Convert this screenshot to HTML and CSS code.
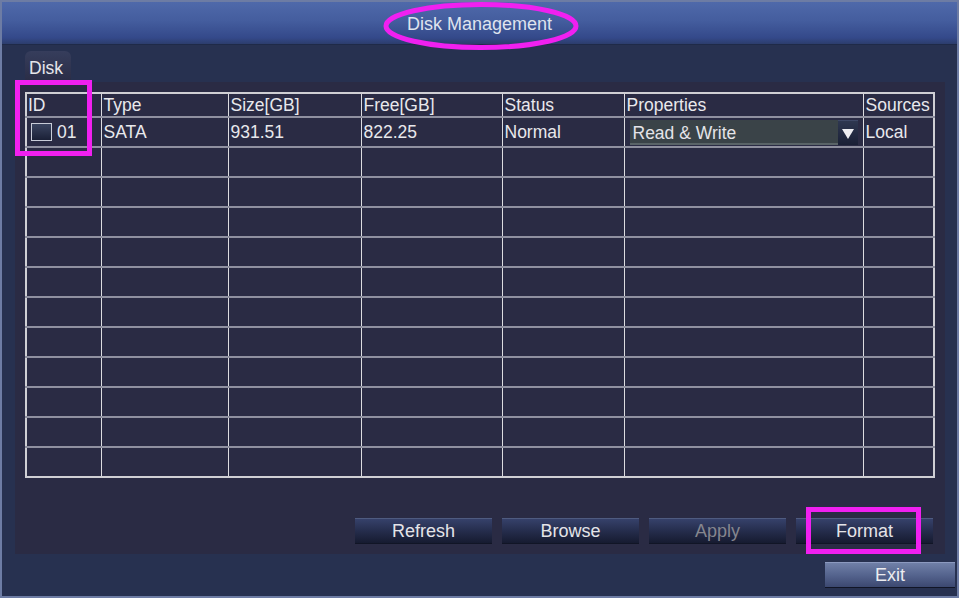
FILE: index.html
```html
<!DOCTYPE html>
<html lang="en">
<head>
  <meta charset="UTF-8">
  <title>Disk Management</title>
  <link rel="stylesheet" href="styles.css">
</head>
<body>
  <div class="window">
    <div class="titlebar">Disk Management</div>
    <div class="main">
      <div class="tab">Disk</div>
      <div class="panel">
        <table class="disks">
          <colgroup>
            <col style="width:75px"><col style="width:127px"><col style="width:133px"><col style="width:141px"><col style="width:122px"><col style="width:239px"><col style="width:71px">
          </colgroup>
          <tr class="head">
            <th>ID</th><th>Type</th><th>Size[GB]</th><th>Free[GB]</th><th>Status</th><th>Properties</th><th>Sources</th>
          </tr>
          <tr>
            <td><span class="check"></span>01</td>
            <td>SATA</td>
            <td>931.51</td>
            <td>822.25</td>
            <td>Normal</td>
            <td>
              <div class="select">
                <span class="select-text">Read &amp; Write</span>
                <span class="select-btn"><svg width="12" height="11" viewBox="0 0 12 11"><path d="M0 1h12L6 11z" fill="#eeeef2"/></svg></span>
              </div>
            </td>
            <td>Local</td>
          </tr>
          <tr><td></td><td></td><td></td><td></td><td></td><td></td><td></td></tr>
          <tr><td></td><td></td><td></td><td></td><td></td><td></td><td></td></tr>
          <tr><td></td><td></td><td></td><td></td><td></td><td></td><td></td></tr>
          <tr><td></td><td></td><td></td><td></td><td></td><td></td><td></td></tr>
          <tr><td></td><td></td><td></td><td></td><td></td><td></td><td></td></tr>
          <tr><td></td><td></td><td></td><td></td><td></td><td></td><td></td></tr>
          <tr><td></td><td></td><td></td><td></td><td></td><td></td><td></td></tr>
          <tr><td></td><td></td><td></td><td></td><td></td><td></td><td></td></tr>
          <tr><td></td><td></td><td></td><td></td><td></td><td></td><td></td></tr>
          <tr><td></td><td></td><td></td><td></td><td></td><td></td><td></td></tr>
          <tr class="last"><td></td><td></td><td></td><td></td><td></td><td></td><td></td></tr>
        </table>
        <div class="actions">
          <button class="btn">Refresh</button>
          <button class="btn">Browse</button>
          <button class="btn disabled">Apply</button>
          <button class="btn">Format</button>
        </div>
      </div>
      <div class="footer">
        <button class="btn exit">Exit</button>
      </div>
    </div>

    <svg class="marks" width="959" height="598" viewBox="0 0 959 598">
      <ellipse cx="481" cy="26" rx="95" ry="21.5" fill="none" stroke="#f020f0" stroke-width="5"/>
      <rect x="17.5" y="82.5" width="72" height="71" fill="none" stroke="#f020f0" stroke-width="5"/>
      <rect x="808.5" y="509.5" width="110" height="42" fill="none" stroke="#f020f0" stroke-width="5"/>
    </svg>
  </div>
</body>
</html>
```

FILE: styles.css
```css
*{box-sizing:border-box;}
body{margin:0; background:#1c2236; font-family:"Liberation Sans", Arial, sans-serif;}
.window{position:relative; width:959px; height:598px; border:2px solid #6d7ca4; background:#273150; display:flex; flex-direction:column;}
.titlebar{height:43px; line-height:44px; text-align:center; color:#dfe3ee; font-size:18px; background:linear-gradient(#4f69aa, #445d9e 45%, #34498a 85%, #2c3d6c); border-bottom:1px solid #1f2a48;}
.main{flex:1; display:flex; flex-direction:column; padding:6px 12px 0 13px;}
.tab{width:46px; height:31px; margin-left:10px; padding:7px 0 0 4px; color:#e6e6ea; font-size:17.5px; background:linear-gradient(#363d5c, #2a2d46); border-radius:6px 6px 0 0;}
.panel{height:472px; background:#2a2b44; padding:10px 11px 0 10px; display:flex; flex-direction:column;}
.disks{width:908px; table-layout:fixed; border-collapse:collapse; border:2px solid #cfcfd4;}
.disks th, .disks td{padding:0 0 0 2px; height:30px; border-left:1px solid #dcdce0; border-bottom:2px solid #8f90a0; color:#e8e8ec; font-size:17.5px; font-weight:normal; text-align:left; vertical-align:middle; white-space:nowrap; overflow:hidden;}
.disks th{height:22px; padding-top:1px;}
.disks th:first-child{padding-left:1px;}
.disks tr.last td{border-bottom:none;}
.check{display:inline-block; width:21px; height:18px; margin:0 5px 0 2px; vertical-align:-3px; border:1px solid #c8ccd8; background:linear-gradient(#3a4460, #1a2036);}
.select{display:flex; width:228px; height:25px; margin-left:3px;}
.select-text{flex:1; background:#3a4348; border-bottom:2px solid #5a6468; padding:3px 0 0 3px; color:#e4e4e8; font-size:17.5px;}
.select-btn{width:20px; display:flex; align-items:center; justify-content:center; background:linear-gradient(#2e3750, #1a2036); border-top:1px solid #3e4866; padding-top:2px;}
.actions{display:flex; justify-content:flex-end; gap:10px; margin-top:40px; padding-right:1px;}
.btn{width:137px; height:25px; border:0; border-top:1px solid #4f5b80; padding:0; color:#e4e4e8; font-family:"Liberation Sans", Arial, sans-serif; font-size:18px; background:linear-gradient(#36416a, #252d4c 50%, #161b30); box-shadow:0 1px 0 #111526;}
.btn.disabled{color:#85868e;}
.footer{display:flex; justify-content:flex-end; padding:8px 0 0 0; margin-right:-10px;}
.btn.exit{width:130px; background:linear-gradient(#7080a8, #55648e 50%, #3c4870); border-top:1px solid #8c9ac0; color:#ececf0;}
.marks{position:absolute; left:-2px; top:-2px; pointer-events:none;}
```
